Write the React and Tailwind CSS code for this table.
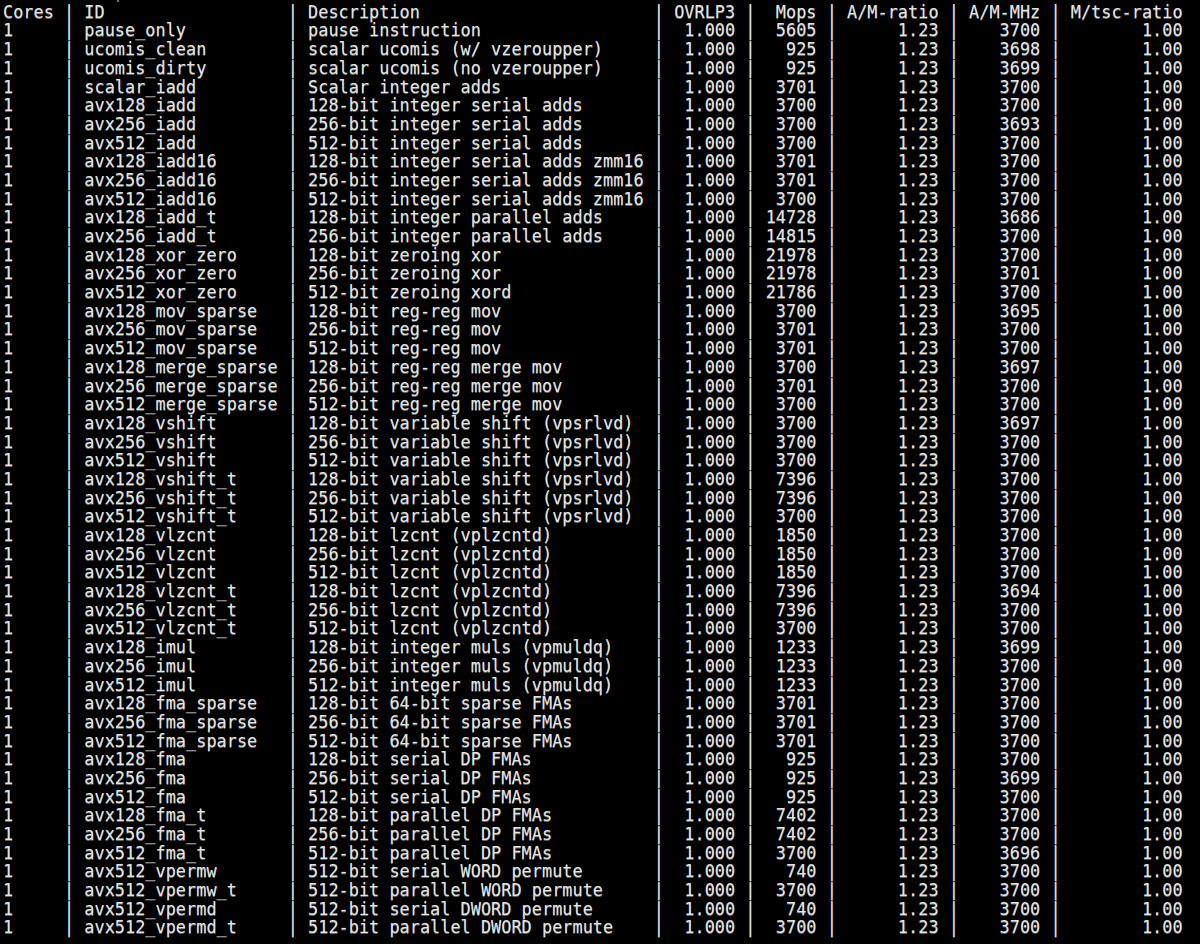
import React from "react";

// benchmark results, straight from the terminal dump
const rows = [
  ["pause_only", "pause instruction", "5605", "3700"],
  ["ucomis_clean", "scalar ucomis (w/ vzeroupper)", "925", "3698"],
  ["ucomis_dirty", "scalar ucomis (no vzeroupper)", "925", "3699"],
  ["scalar_iadd", "Scalar integer adds", "3701", "3700"],
  ["avx128_iadd", "128-bit integer serial adds", "3700", "3700"],
  ["avx256_iadd", "256-bit integer serial adds", "3700", "3693"],
  ["avx512_iadd", "512-bit integer serial adds", "3700", "3700"],
  ["avx128_iadd16", "128-bit integer serial adds zmm16", "3701", "3700"],
  ["avx256_iadd16", "256-bit integer serial adds zmm16", "3701", "3700"],
  ["avx512_iadd16", "512-bit integer serial adds zmm16", "3700", "3700"],
  ["avx128_iadd_t", "128-bit integer parallel adds", "14728", "3686"],
  ["avx256_iadd_t", "256-bit integer parallel adds", "14815", "3700"],
  ["avx128_xor_zero", "128-bit zeroing xor", "21978", "3700"],
  ["avx256_xor_zero", "256-bit zeroing xor", "21978", "3701"],
  ["avx512_xor_zero", "512-bit zeroing xord", "21786", "3700"],
  ["avx128_mov_sparse", "128-bit reg-reg mov", "3700", "3695"],
  ["avx256_mov_sparse", "256-bit reg-reg mov", "3701", "3700"],
  ["avx512_mov_sparse", "512-bit reg-reg mov", "3701", "3700"],
  ["avx128_merge_sparse", "128-bit reg-reg merge mov", "3700", "3697"],
  ["avx256_merge_sparse", "256-bit reg-reg merge mov", "3701", "3700"],
  ["avx512_merge_sparse", "512-bit reg-reg merge mov", "3700", "3700"],
  ["avx128_vshift", "128-bit variable shift (vpsrlvd)", "3700", "3697"],
  ["avx256_vshift", "256-bit variable shift (vpsrlvd)", "3700", "3700"],
  ["avx512_vshift", "512-bit variable shift (vpsrlvd)", "3700", "3700"],
  ["avx128_vshift_t", "128-bit variable shift (vpsrlvd)", "7396", "3700"],
  ["avx256_vshift_t", "256-bit variable shift (vpsrlvd)", "7396", "3700"],
  ["avx512_vshift_t", "512-bit variable shift (vpsrlvd)", "3700", "3700"],
  ["avx128_vlzcnt", "128-bit lzcnt (vplzcntd)", "1850", "3700"],
  ["avx256_vlzcnt", "256-bit lzcnt (vplzcntd)", "1850", "3700"],
  ["avx512_vlzcnt", "512-bit lzcnt (vplzcntd)", "1850", "3700"],
  ["avx128_vlzcnt_t", "128-bit lzcnt (vplzcntd)", "7396", "3694"],
  ["avx256_vlzcnt_t", "256-bit lzcnt (vplzcntd)", "7396", "3700"],
  ["avx512_vlzcnt_t", "512-bit lzcnt (vplzcntd)", "3700", "3700"],
  ["avx128_imul", "128-bit integer muls (vpmuldq)", "1233", "3699"],
  ["avx256_imul", "256-bit integer muls (vpmuldq)", "1233", "3700"],
  ["avx512_imul", "512-bit integer muls (vpmuldq)", "1233", "3700"],
  ["avx128_fma_sparse", "128-bit 64-bit sparse FMAs", "3701", "3700"],
  ["avx256_fma_sparse", "256-bit 64-bit sparse FMAs", "3701", "3700"],
  ["avx512_fma_sparse", "512-bit 64-bit sparse FMAs", "3701", "3700"],
  ["avx128_fma", "128-bit serial DP FMAs", "925", "3700"],
  ["avx256_fma", "256-bit serial DP FMAs", "925", "3699"],
  ["avx512_fma", "512-bit serial DP FMAs", "925", "3700"],
  ["avx128_fma_t", "128-bit parallel DP FMAs", "7402", "3700"],
  ["avx256_fma_t", "256-bit parallel DP FMAs", "7402", "3700"],
  ["avx512_fma_t", "512-bit parallel DP FMAs", "3700", "3696"],
  ["avx512_vpermw", "512-bit serial WORD permute", "740", "3700"],
  ["avx512_vpermw_t", "512-bit parallel WORD permute", "3700", "3700"],
  ["avx512_vpermd", "512-bit serial DWORD permute", "740", "3700"],
  ["avx512_vpermd_t", "512-bit parallel DWORD permute", "3700", "3700"],
];

// build one fixed-width line like the tool prints it
const line = (cores, id, desc, ovr, mops, ratio, mhz, tsc) =>
  [
    cores.padEnd(5),
    id.padEnd(19),
    desc.padEnd(33),
    ovr.padStart(6),
    mops.padStart(5),
    ratio.padStart(9),
    mhz.padStart(7),
    tsc.padStart(11),
  ].join(" | ");

const header = line(
  "Cores",
  "ID",
  "Description",
  "OVRLP3",
  "Mops",
  "A/M-ratio",
  "A/M-MHz",
  "M/tsc-ratio"
);

const App = () => {
  return (
    <div className="w-[1200px] h-[944px] overflow-hidden bg-black">
      {/* leftover speck of the line scrolled off the top */}
      <div className="h-[2.8px] flex items-start">
        <span className="ml-[117px] w-[2px] h-[2px] rounded-full bg-[#9a9a9a]" />
      </div>
      <div
        className="pl-[3px] text-[16.9px] leading-[18.69px] text-[#e4e4e4] whitespace-pre [text-shadow:0_0.5px_0_rgba(228,228,228,0.45)]"
        style={{ fontFamily: '"DejaVu Sans Mono", "Liberation Mono", monospace' }}
      >
        <div>{header}</div>
        {rows.map(([id, desc, mops, mhz], index) => (
          <div key={index}>
            {line("1", id, desc, "1.000", mops, "1.23", mhz, "1.00")}
          </div>
        ))}
      </div>
    </div>
  );
};

export default App;
